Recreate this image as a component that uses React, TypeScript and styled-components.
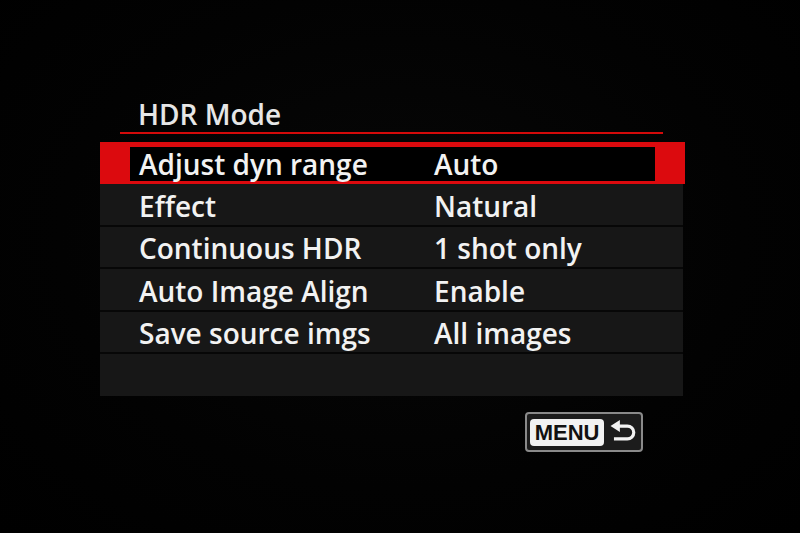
import styled, { createGlobalStyle } from 'styled-components'

const GlobalStyle = createGlobalStyle`
    html, body {
        margin: 0;
        padding: 0;
        background: #000;
    }
`

interface Setting {
    label: string;
    value: string;
}

const settings: Setting[] = [
    { label: 'Adjust dyn range', value: 'Auto' },
    { label: 'Effect', value: 'Natural' },
    { label: 'Continuous HDR', value: '1 shot only' },
    { label: 'Auto Image Align', value: 'Enable' },
    { label: 'Save source imgs', value: 'All images' },
]

const Screen = styled.div`
    width: 800px;
    height: 533px;
    box-sizing: border-box;
    padding: 97px 0 0 100px;
    background: radial-gradient(ellipse at 50% 45%, #070707 0%, #020202 60%, #000 100%);
    font-family: 'Open Sans', 'Noto Sans', sans-serif;
    overflow: hidden;
`

const Panel = styled.section`
    width: 585px;
    display: flex;
    flex-direction: column;
`

const Title = styled.h2`
    margin: 0;
    height: 35px;
    padding-left: 38px;
    font-size: 28px;
    font-weight: 600;
    line-height: 35px;
    color: #e6e6e6;
`

const Underline = styled.div`
    height: 2px;
    margin: 0 22px 0 20px;
    background: #d30a0a;
`

const List = styled.ul`
    list-style: none;
    margin: 8px 2px 0 0;
    padding: 0;
    background: #171717;
`

const Row = styled.li<{ selected?: boolean }>`
    position: relative;
    height: ${({ selected }) => selected ? '42px' : '42.5px'};
    display: grid;
    grid-template-columns: 334px 1fr;
    align-items: center;
    box-sizing: border-box;
    padding-top: ${({ selected }) => selected ? '2px' : '3px'};
    border-bottom: ${({ selected }) => selected ? 'none' : '2px solid #070707'};
    background: ${({ selected }) => selected ? '#dc0a0e' : 'transparent'};
    margin-right: ${({ selected }) => selected ? '-2px' : '0'};
`

const Highlight = styled.div`
    position: absolute;
    top: 5px;
    bottom: 3px;
    left: 30px;
    right: 30px;
    background: #000;
`

const Cell = styled.span<{ indent?: number }>`
    position: relative;
    padding-left: ${({ indent }) => indent ?? 0}px;
    font-size: 28px;
    font-weight: 600;
    color: #f2f2f2;
    line-height: 1;
    white-space: nowrap;
`

const EmptyRow = styled.li`
    height: 42px;
`

const MenuButton = styled.div`
    margin: 16px 0 0 425px;
    width: 118px;
    height: 40px;
    box-sizing: border-box;
    border: 2px solid #8a8a8a;
    border-radius: 4px;
    background: #1c1c1c;
    display: flex;
    align-items: center;
    gap: 5px;
    padding: 0 4px 0 3px;
`

const MenuLabel = styled.span`
    width: 75px;
    height: 27px;
    border-radius: 4px;
    background: #f2f2f2;
    color: #111;
    font-family: 'Liberation Sans', Arial, sans-serif;
    font-size: 22px;
    font-weight: bold;
    line-height: 28px;
    text-align: center;
`

const ReturnIcon = () => (
    <svg width="28" height="26" viewBox="0 0 28 26">
        <path d="M10 7 H18.5 A6.5 6.5 0 0 1 18.5 20 H5" fill="none" stroke="#f2f2f2" strokeWidth="3.2" />
        <path d="M1.5 7 L11 1 V13 Z" fill="#f2f2f2" />
    </svg>
)

export default function App() {
    return (
        <Screen>
            <GlobalStyle />
            <Panel>
                <Title>HDR Mode</Title>
                <Underline />
                <List>
                    {settings.map((s, index) => (
                        <Row key={s.label} selected={index === 0}>
                            {index === 0 && <Highlight />}
                            <Cell indent={39}>{s.label}</Cell>
                            <Cell>{s.value}</Cell>
                        </Row>
                    ))}
                    <EmptyRow />
                </List>
            </Panel>
            <MenuButton>
                <MenuLabel>MENU</MenuLabel>
                <ReturnIcon />
            </MenuButton>
        </Screen>
    )
}
